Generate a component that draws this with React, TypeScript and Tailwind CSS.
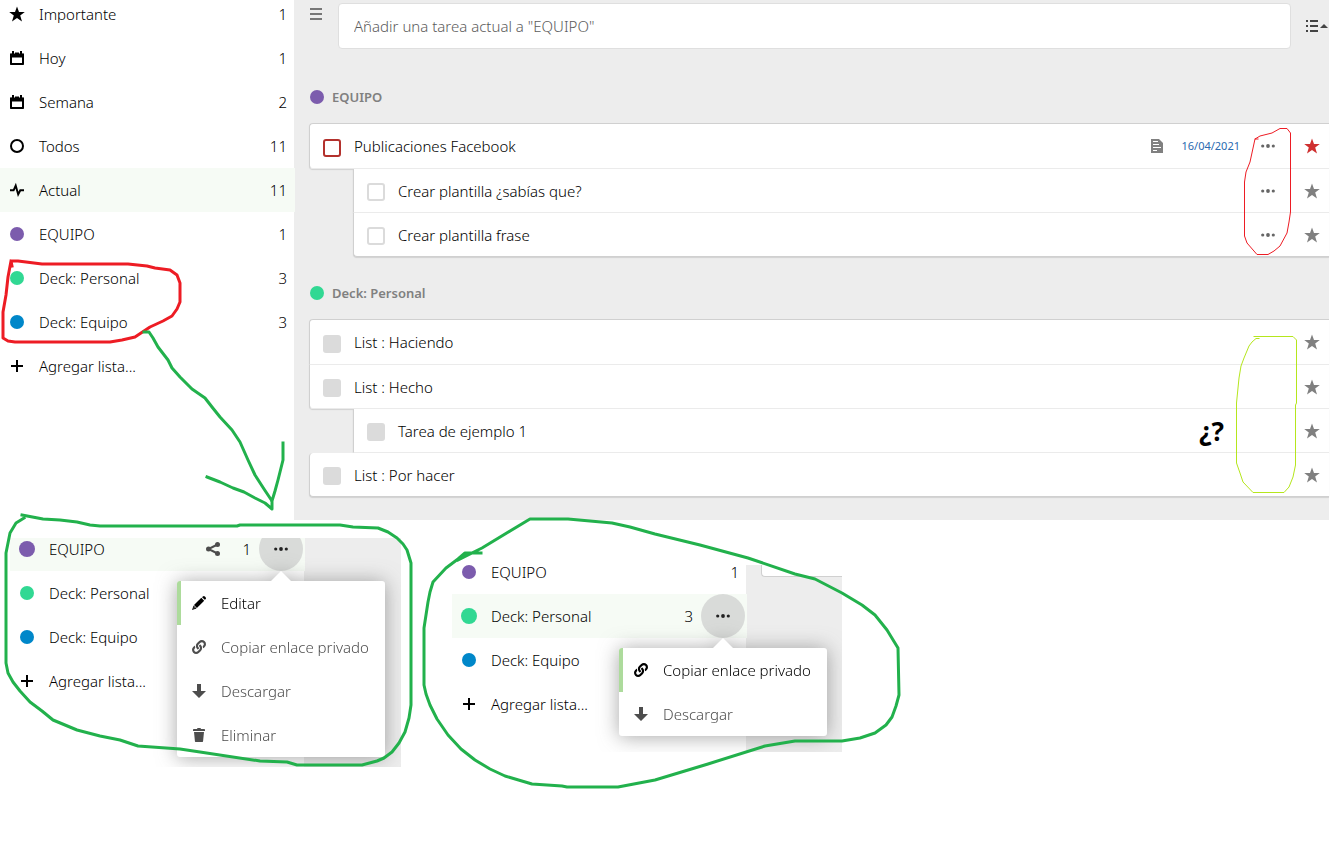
import React, { useState } from 'react';
import { FaLink } from 'react-icons/fa';

type IconProps = { className?: string };

function IconStar({ className = 'h-4 w-4' }: IconProps) {
  return (
    <svg viewBox="0 0 16 16" className={className} fill="currentColor" aria-hidden>
      <path d="M8 .4l2 5.5 5.8.1-4.6 3.6 1.8 5.8L8 12l-5 3.4 1.8-5.8L.2 6 6 5.9z" />
    </svg>
  );
}

function IconCalendar() {
  return (
    <svg viewBox="0 0 16 16" className="h-4 w-4" fill="currentColor" aria-hidden>
      <path
        fillRule="evenodd"
        d="M3 1h2v2c0 .9 1 .9 1 0V2.600h4V3c0 .9 1 .9 1 0V1h2v2c0 .6.5.8.8.2.7 0 1.200.4 1.200 1V14c0 .6-.4 1-1 1H2c-.6 0-1-.4-1-1V4.200c0-.6.5-1 1.200-1 .3.6.8.4.8-.2zM3 7.500V13h10V7.500z"
      />
    </svg>
  );
}

function IconCircle() {
  return (
    <svg viewBox="0 0 16 16" className="h-4 w-4" fill="none" stroke="currentColor" strokeWidth="2" aria-hidden>
      <circle cx="8" cy="8" r="6" />
    </svg>
  );
}

function IconPulse() {
  return (
    <svg viewBox="0 0 16 16" className="h-4 w-4" fill="none" stroke="currentColor" strokeWidth="2" aria-hidden>
      <path d="M1 8.300h3.600L6.700 3.600l2.500 8.800 2.100-4.100H15" />
    </svg>
  );
}

function IconPlus() {
  return (
    <svg viewBox="0 0 16 16" className="h-4 w-4" fill="currentColor" aria-hidden>
      <path d="M7 2h2v5h5v2H9v5H7V9H2V7h5z" />
    </svg>
  );
}

function IconMore() {
  return (
    <svg viewBox="0 0 16 16" className="h-4 w-4" fill="currentColor" aria-hidden>
      <circle cx="2.700" cy="8" r="1.600" />
      <circle cx="8" cy="8" r="1.900" />
      <circle cx="13.300" cy="8" r="1.600" />
    </svg>
  );
}

function IconShare() {
  return (
    <svg viewBox="0 0 16 16" className="h-4 w-4" fill="currentColor" aria-hidden>
      <path d="M12.500 3.500L3.500 8l9 4.500" fill="none" stroke="currentColor" strokeWidth="2" />
      <circle cx="3.500" cy="8" r="2.500" />
      <circle cx="12.500" cy="3.500" r="2.500" />
      <circle cx="12.500" cy="12.500" r="2.500" />
    </svg>
  );
}

function IconNote() {
  return (
    <svg viewBox="0 0 16 16" className="h-4 w-4" fill="currentColor" aria-hidden>
      <path
        fillRule="evenodd"
        d="M2 1h8l4 4v10H2zM4 3v1h5V3zM4 6v1h6V6zM4 9v1h8V9zM4 12v1h4v-1z"
      />
    </svg>
  );
}

function IconPencil() {
  return (
    <svg viewBox="0 0 16 16" className="h-4 w-4" fill="currentColor" aria-hidden>
      <path d="M12.800 1c.7 0 2.200 1.500 2.200 2.200 0 .5-.8 1.300-1.200 1.600l-2.700-2.600c.4-.4 1.200-1.200 1.700-1.200z" />
      <path d="M10.300 2.800l2.900 2.900-7.300 7.200-2.900-2.900z" />
      <path fillRule="evenodd" d="M2.600 10.600L1 15l4.500-1.600zM3 12.200l.8.8-1.300.5z" />
    </svg>
  );
}

function IconDownload() {
  return (
    <svg viewBox="0 0 16 16" className="h-4 w-4" fill="currentColor" aria-hidden>
      <path d="M6 1h4v7h5l-7 7-7-7h5z" />
    </svg>
  );
}

function IconTrash() {
  return (
    <svg viewBox="0 0 16 16" className="h-4 w-4" fill="currentColor" aria-hidden>
      <path d="M6.500 1L6 2H3c-.6 0-1 .4-1 1v1h12V3c0-.6-.4-1-1-1h-3l-.5-1zM3 5l.9 9c0 .6.4 1 1 1h6.200c.6 0 1-.4 1-1L13 5z" />
    </svg>
  );
}

function IconLink() {
  return <FaLink className="m-px h-3.5 w-3.5" aria-hidden />;
}

function Dot({ color, large = false }: { color: string; large?: boolean }) {
  return <span className={`block rounded-full ${large ? 'h-4 w-4' : 'h-3.5 w-3.5'} ${color}`} />;
}

type NavRowProps = {
  icon: React.ReactNode;
  label: string;
  count?: number;
  active?: boolean;
  shared?: boolean;
  menu?: React.ReactNode;
};

function NavRow({ icon, label, count, active, shared, menu }: NavRowProps) {
  return (
    <li className={`relative flex h-11 items-center ${active ? '-mr-px bg-[#f6fbf5]' : ''}`}>
      <a href="#" className="flex h-full flex-1 items-center">
        <span className="grid w-[34px] place-items-center text-black">{icon}</span>
        <span className="pl-[5px]">{label}</span>
      </a>
      {shared ? (
        <button type="button" aria-label="Compartir" className="mr-[21px] text-[#4d4d4d]">
          <IconShare />
        </button>
      ) : null}
      {count !== undefined ? <span className={active ? 'pr-2' : 'pr-[7px]'}>{count}</span> : null}
      {menu ? (
        <div className="relative mr-[2px]">
          <button
            type="button"
            aria-label="Acciones"
            className="grid h-11 w-11 place-items-center rounded-full bg-[#d9dbd9] text-[#222]"
          >
            <IconMore />
          </button>
          {menu}
        </div>
      ) : null}
    </li>
  );
}

const menuItems = {
  editar: { label: 'Editar', icon: <IconPencil /> },
  enlace: { label: 'Copiar enlace privado', icon: <IconLink /> },
  descargar: { label: 'Descargar', icon: <IconDownload /> },
  eliminar: { label: 'Eliminar', icon: <IconTrash /> },
};

function ActionMenu({ items }: { items: (keyof typeof menuItems)[] }) {
  return (
    <div className="absolute -right-[82px] top-[54px] z-10 w-[208px] drop-shadow-[0_1px_10px_rgba(77,77,77,0.5)]">
      <svg viewBox="0 0 20 10" className="absolute -top-[10px] left-[94px] h-[10px] w-5" fill="#fff" aria-hidden>
        <path d="M0 10L10 0l10 10z" />
      </svg>
      <ul className="overflow-hidden rounded-[3px] bg-white">
        {items.map((key, i) => (
          <li key={key}>
            <button
              type="button"
              className={`flex h-11 w-full items-center border-l-4 ${
                i === 0 ? 'border-[#addb9c] text-black' : 'border-transparent text-[#4d4d4d]'
              }`}
            >
              <span className="grid w-9 place-items-center">{menuItems[key].icon}</span>
              <span className="pl-1">{menuItems[key].label}</span>
            </button>
          </li>
        ))}
      </ul>
    </div>
  );
}

type Task = {
  id: string;
  title: string;
  tone: 'high' | 'open' | 'readonly';
  sub?: boolean;
  date?: string;
  starred?: boolean;
  mark?: string;
  corners: string;
};

const boxTone = {
  high: 'border-2 border-[#b3312d] bg-white',
  open: 'border-2 border-[#dbdbdb] bg-white',
  readonly: 'bg-[#dbdbdb]',
};

function TaskRow({ task, first }: { task: Task; first: boolean }) {
  return (
    <li
      className={`relative flex items-center border-b border-l border-l-[#d0d0d0] bg-white shadow-[0_1px_1px_rgba(0,0,0,0.12)] ${
        task.corners
      } ${first ? 'h-[46px] border-t border-t-[#d0d0d0]' : 'h-11'} ${task.sub ? 'ml-11' : ''}`}
    >
      <input
        id={task.id}
        type="checkbox"
        disabled={task.tone === 'readonly'}
        className={`ml-[13px] mt-[3px] h-[18px] w-[18px] shrink-0 appearance-none rounded-[3px] ${boxTone[task.tone]}`}
      />
      <label htmlFor={task.id} className="flex-1 pl-[13px]">
        {task.title}
      </label>
      {task.date ? (
        <>
          <span className="mr-4 text-[#808080]">
            <IconNote />
          </span>
          <time className="mr-5 text-[11px] font-normal text-[#2a6ab0]">{task.date}</time>
        </>
      ) : null}
      {task.tone !== 'readonly' ? (
        <button type="button" aria-label="Más acciones" className="mr-7 text-[#666]">
          <IconMore />
        </button>
      ) : null}
      {task.mark ? (
        <span className="absolute right-[105px] text-[26px] font-bold leading-none text-black">{task.mark}</span>
      ) : null}
      <button
        type="button"
        aria-label="Importante"
        className={`mr-[9px] ${task.starred ? 'text-[#cf3030]' : 'text-[#808080]'}`}
      >
        <IconStar />
      </button>
    </li>
  );
}

const equipoTasks: Task[] = [
  {
    id: 't1',
    title: 'Publicaciones Facebook',
    tone: 'high',
    date: '16/04/2021',
    starred: true,
    corners: 'rounded-l-[4px] border-b-[#ebebeb]',
  },
  { id: 't2', title: 'Crear plantilla ¿sabías que?', tone: 'open', sub: true, corners: 'border-b-[#ebebeb]' },
  { id: 't3', title: 'Crear plantilla frase', tone: 'open', sub: true, corners: 'rounded-bl-[4px] border-b-[#d0d0d0]' },
];

const personalTasks: Task[] = [
  { id: 't4', title: 'List : Haciendo', tone: 'readonly', corners: 'rounded-tl-[4px] border-b-[#ebebeb]' },
  { id: 't5', title: 'List : Hecho', tone: 'readonly', corners: 'rounded-bl-[4px] border-b-[#ebebeb]' },
  { id: 't6', title: 'Tarea de ejemplo 1', tone: 'readonly', sub: true, mark: '¿?', corners: 'border-b-[#ebebeb]' },
  { id: 't7', title: 'List : Por hacer', tone: 'readonly', corners: 'rounded-l-[4px] border-b-[#d0d0d0]' },
];

function TaskGroup({ title, color, tasks }: { title: string; color: string; tasks: Task[] }) {
  return (
    <section>
      <h2 className="flex h-[26px] items-center gap-2 pl-px text-[13px] font-semibold text-[#808080]">
        <Dot color={color} />
        {title}
      </h2>
      <ul className="mt-[13px]">
        {tasks.map((task, i) => (
          <TaskRow key={task.id} task={task} first={i === 0} />
        ))}
      </ul>
    </section>
  );
}

function Annotations() {
  return (
    <svg
      viewBox="0 0 1332 855"
      className="pointer-events-none absolute left-0 top-0 z-20 h-[855px] w-[1332px]"
      fill="none"
      strokeLinecap="square"
      strokeLinejoin="round"
      aria-hidden
    >
      <g stroke="#ed1c24" strokeWidth="3">
        <path d="M12 266L11 261 18 261 42 264 128 264 147 266 155 268 170 270 177 275 180 283 180 302 177 309 172 316 163 321 150 327 135 337 122 340 110 342 15 342 8 341 3 338 3 312 6 295 8 277 11 261" />
      </g>
      <g stroke="#ed1c24" strokeWidth="1">
        <path d="M1258 139L1255 139 1260 136 1272 133 1280 128.500 1287 128.500 1290.500 133V212L1289 222 1287 233 1280 246 1274 251 1268 254.500H1257L1247 243 1244.500 236V182L1246 172 1250 162 1255 139" />
      </g>
      <g stroke="#b5e61d" strokeWidth="1">
        <path d="M1254 336.500H1293L1296.500 340V403L1295.500 405V465L1293 477 1289 487 1284 492.500H1253L1243 482 1240 473 1236.500 463V403L1239 378 1241 366 1244 358 1249 346 1252 342 1256 338.500H1259" />
      </g>
      <g stroke="#22b14c" strokeWidth="3">
        <path d="M144 332L149 332 153 338 158 347 168 360 172 368 180 377 186 383 192 389 205 398 212 407 220 417 232 430 240 442 248 460 255 475 264 489 272 501 272 509 265 503 255 498 244 492 233 488 220 482 207 477M283 443L283 460 278 480 275 491 272 501" />
        <path d="M22 515L43 519 60 520 77 522 90 525 100 526 237 526 240 525 340 525 353 527 378 528 388 532 397 538 403 544 407 550 411 563 411 705 409 718 405 732 399 743 392 752 384 758 377 761 362 765 297 765 287 762 260 761 200 752 180 749 138 746 120 740 100 736 77 730 53 720 42 711 30 702 20 691 13 682 8 673 6 663 6 553 10 533 16 523 24 518" />
        <path d="M481 553L465 553 458 559 446 568 433 582 430 592 428 602 424 628 424 685 426 694 430 705 437 719 448 735 461 749 475 760 490 769 505 776 532 784 562 786 567 787 618 787 655 780 708 764 765 746 795 741 842 741 860 738 875 733 886 725 892 717 896 706 899 695 898 648 887 630 875 615 862 605 842 593 815 579 795 574 748 558 700 545 655 534 630 527 612 523 568 519 530 519 482 548 458 560" />
      </g>
    </svg>
  );
}

export default function App() {
  const [draft, setDraft] = useState('');

  return (
    <div className="relative min-h-screen overflow-hidden bg-white font-['Noto_Sans',sans-serif] text-[15px] font-light leading-5 text-black">
      <div className="flex">
        <nav className="w-[294px] shrink-0" aria-label="Listas">
          <ul className="-mt-2">
            <NavRow icon={<IconStar />} label="Importante" count={1} />
            <NavRow icon={<IconCalendar />} label="Hoy" count={1} />
            <NavRow icon={<IconCalendar />} label="Semana" count={2} />
            <NavRow icon={<IconCircle />} label="Todos" count={11} />
            <NavRow icon={<IconPulse />} label="Actual" count={11} active />
            <NavRow icon={<Dot color="bg-[#7c5cad]" />} label="EQUIPO" count={1} />
            <NavRow icon={<Dot color="bg-[#31d893]" />} label="Deck: Personal" count={3} />
            <NavRow icon={<Dot color="bg-[#0087c9]" />} label="Deck: Equipo" count={3} />
            <NavRow icon={<IconPlus />} label="Agregar lista..." />
          </ul>
        </nav>

        <main className="mr-[3px] min-w-0 flex-1 bg-[#ededed] pb-[23px] pl-[15px]">
          <header className="flex h-[84px] items-start pt-[3px]">
            <button type="button" aria-label="Menú" className="mt-[3px] w-[29px] text-[#777]">
              <svg viewBox="0 0 16 16" className="-ml-px h-4 w-4" fill="currentColor" aria-hidden>
                <path d="M2 2h12v2H2zM2 7h12v2H2zM2 12h12v2H2z" />
              </svg>
            </button>
            <input
              type="text"
              aria-label="Añadir tarea"
              value={draft}
              onChange={(e) => setDraft(e.target.value)}
              placeholder={'Añadir una tarea actual a "EQUIPO"'}
              className="h-[46px] min-w-0 flex-1 rounded-[4px] border border-[#dfdfdf] bg-white px-[15px] placeholder:text-[#5c5c5c]"
            />
            <button type="button" aria-label="Ordenar" className="ml-[14px] mt-[15px] flex items-center text-[#444]">
              <svg viewBox="0 0 24 16" className="h-4 w-6" fill="currentColor" aria-hidden>
                <path d="M1 2h2v2H1zM5 2h8v2H5zM1 7h2v2H1zM5 7h8v2H5zM1 12h2v2H1zM5 12h8v2H5zM15 10l4-4 4 4z" />
              </svg>
            </button>
          </header>
          <div className="flex flex-col gap-[23px]">
            <TaskGroup title="EQUIPO" color="bg-[#7c5cad]" tasks={equipoTasks} />
            <TaskGroup title="Deck: Personal" color="bg-[#31d893]" tasks={personalTasks} />
          </div>
        </main>
      </div>

      <div className="flex items-start gap-[51px] pl-[10px] pt-[18px]">
        <div className="flex h-[229px] w-[391px] overflow-hidden">
          <ul className="relative z-10 -mt-[11px] w-[294px] shrink-0">
            <NavRow
              icon={<Dot color="bg-[#7c5cad]" large />}
              label="EQUIPO"
              count={1}
              active
              shared
              menu={<ActionMenu items={['editar', 'enlace', 'descargar', 'eliminar']} />}
            />
            <NavRow icon={<Dot color="bg-[#31d893]" />} label="Deck: Personal" />
            <NavRow icon={<Dot color="bg-[#0087c9]" />} label="Deck: Equipo" />
            <NavRow icon={<IconPlus />} label="Agregar lista..." />
          </ul>
          <div className="flex-1 bg-[#ededed]" />
        </div>

        <div className="mt-[22px] flex h-[192px] w-[390px] overflow-hidden">
          <ul className="relative z-10 -mt-[10px] w-[294px] shrink-0">
            <NavRow icon={<Dot color="bg-[#7c5cad]" />} label="EQUIPO" count={1} />
            <NavRow
              icon={<Dot color="bg-[#31d893]" large />}
              label="Deck: Personal"
              count={3}
              active
              menu={<ActionMenu items={['enlace', 'descargar']} />}
            />
            <NavRow icon={<Dot color="bg-[#0087c9]" />} label="Deck: Equipo" />
            <NavRow icon={<IconPlus />} label="Agregar lista..." />
          </ul>
          <div className="mt-[5px] flex-1 bg-[#ededed] pl-[15px]">
            <div className="h-3 rounded-bl-[4px] border-b border-l border-[#d0d0d0] bg-white" />
          </div>
        </div>
      </div>

      <Annotations />
    </div>
  );
}
